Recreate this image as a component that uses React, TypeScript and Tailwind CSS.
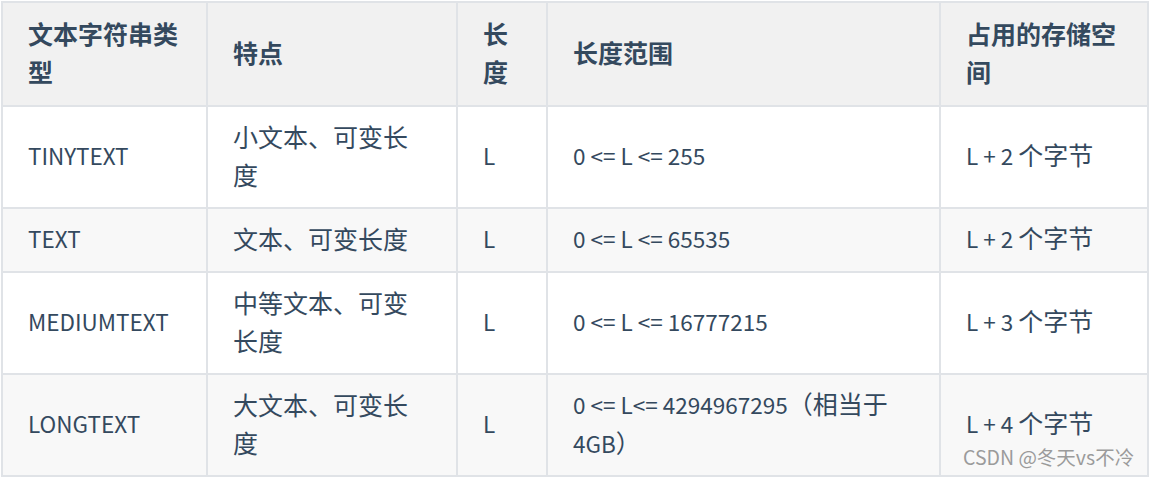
import React from "react";

const rows: { t: string; f: string; l: string; r: string; s: string }[] = [
  { t: "TINYTEXT", f: "小文本、可变长度", l: "L", r: "0 <= L <= 255", s: "L + 2 个字节" },
  { t: "TEXT", f: "文本、可变长度", l: "L", r: "0 <= L <= 65535", s: "L + 2 个字节" },
  { t: "MEDIUMTEXT", f: "中等文本、可变长度", l: "L", r: "0 <= L <= 16777215", s: "L + 3 个字节" },
  { t: "LONGTEXT", f: "大文本、可变长度", l: "L", r: "0 <= L<= 4294967295（相当于4GB）", s: "L + 4 个字节" },
];

const heights = ["h-[102px]", "h-[64px]", "h-[102px]", "h-[102px]"];
const bgs = ["bg-white", "bg-[#f8f8f8]", "bg-white", "bg-[#f8f8f8]"];

function Mixed({ text }: { text: string }) {
  const parts = text.match(/[\u3000-\u9fff\uff00-\uffef]+|[^\u3000-\u9fff\uff00-\uffef]+/g) || [];
  return (
    <>
      {parts.map((p, i) =>
        /[\u3000-\u9fff\uff00-\uffef]/.test(p) ? (
          <span key={i} className="text-[25px]">{p}</span>
        ) : (
          <span key={i} className="text-[22.5px]">{p}</span>
        )
      )}
    </>
  );
}

export default function App() {
  const cell = "border-2 border-[#e0e3e7] pl-[25px] pr-[25px] pb-[5px] align-middle text-left";
  return (
    <div
      className="relative w-[1149px] h-[477px] bg-white p-px text-[#34495e] text-[25px] leading-[38px]"
      style={{ fontFamily: '"Noto Sans CJK SC", "Noto Sans", sans-serif' }}
    >
      <table className="border-collapse w-[1146px] table-fixed">
        <colgroup>
          <col className="w-[205px]" />
          <col className="w-[250px]" />
          <col className="w-[90px]" />
          <col className="w-[393px]" />
          <col className="w-[208px]" />
        </colgroup>
        <thead>
          <tr className="h-[104px] bg-[#f1f1f1] font-bold">
            <th className={cell}>文本字符串类型</th>
            <th className={cell}>特点</th>
            <th className={cell}>长度</th>
            <th className={cell}>长度范围</th>
            <th className={cell}>占用的存储空间</th>
          </tr>
        </thead>
        <tbody>
          {rows.map((r, i) => (
            <tr key={i} className={`${heights[i]} ${bgs[i]}`}>
              <td className={cell}><Mixed text={r.t} /></td>
              <td className={cell}><Mixed text={r.f} /></td>
              <td className={cell}><Mixed text={r.l} /></td>
              <td className={cell}><Mixed text={r.r} /></td>
              <td className={cell}><Mixed text={r.s} /></td>
            </tr>
          ))}
        </tbody>
      </table>
      <div className="absolute left-[963px] top-[443px] text-[19.5px] leading-[28px] text-[#9b9b9b]">
        CSDN @冬天vs不冷
      </div>
    </div>
  );
}
